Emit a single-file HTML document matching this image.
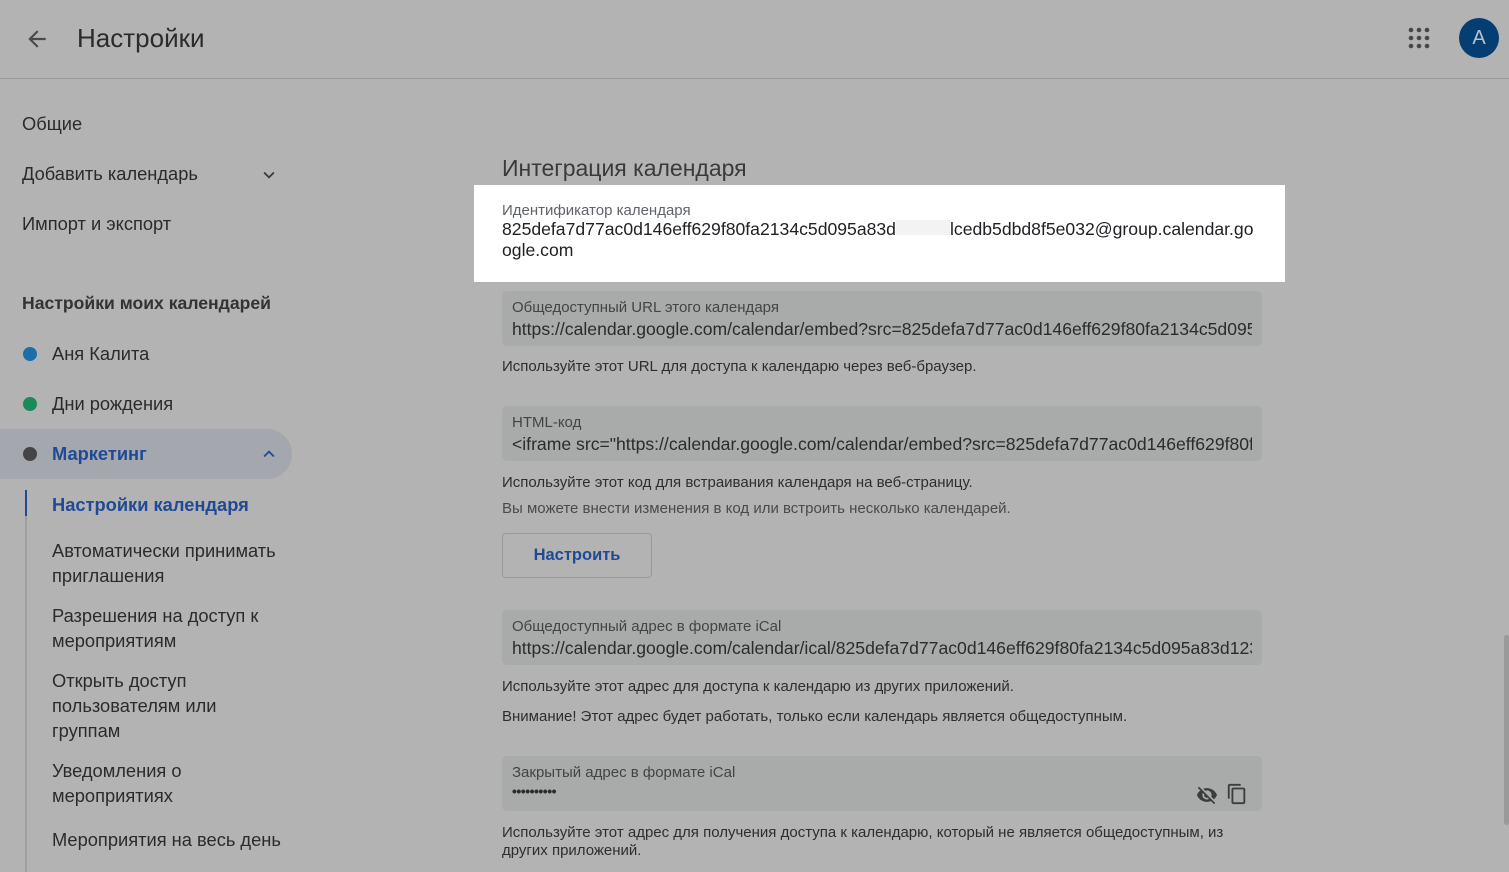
<!DOCTYPE html>
<html><head><meta charset="utf-8"><style>
*{margin:0;padding:0;box-sizing:border-box}
body{width:1509px;height:872px;overflow:hidden;background:#b3b3b3;font-family:"Liberation Sans",sans-serif;color:#2b2b2b;position:relative}
.a{position:absolute;white-space:nowrap}
.nav{font-size:18.3px;color:#2b2b2b}
.field{position:absolute;left:502px;width:760px;background:#a9aaaa;border-radius:5px}
.lab{position:absolute;left:10px;font-size:15px;color:#444}
.val{position:absolute;left:10px;font-size:17.6px;color:#2b2b2b;white-space:nowrap;overflow:hidden;width:740px}
.help{position:absolute;left:502px;font-size:15px;color:#2e2e2e;white-space:nowrap}
</style></head><body>
<svg class="a" style="left:24px;top:26px" width="26" height="26" viewBox="0 0 24 24"><path d="M20 11H7.8l5.6-5.6L12 4l-8 8 8 8 1.4-1.4L7.8 13H20z" fill="#4a4a4a"/></svg>
<div class="a" style="left:77px;top:23px;font-size:26px;color:#2b2b2b">Настройки</div>
<svg class="a" style="left:1408px;top:27px" width="22" height="22"><g fill="#474747"><circle cx="3" cy="3" r="2.3"/><circle cx="11" cy="3" r="2.3"/><circle cx="19" cy="3" r="2.3"/><circle cx="3" cy="11" r="2.3"/><circle cx="11" cy="11" r="2.3"/><circle cx="19" cy="11" r="2.3"/><circle cx="3" cy="19" r="2.3"/><circle cx="11" cy="19" r="2.3"/><circle cx="19" cy="19" r="2.3"/></g></svg>
<div class="a" style="left:1459px;top:18px;width:40px;height:40px;border-radius:50%;background:#043e72;color:#b8c3cf;font-size:20px;text-align:center;line-height:40px">A</div>
<div class="a" style="left:0;top:78px;width:1509px;height:1px;background:#9a9a9a"></div>

<div class="a nav" style="left:22px;top:113px">Общие</div>
<div class="a nav" style="left:22px;top:163px">Добавить календарь</div>
<svg class="a" style="left:258px;top:164px" width="22" height="22" viewBox="0 0 24 24"><path d="M7.4 8.6 12 13.2l4.6-4.6L18 10l-6 6-6-6z" fill="#3a3a3a"/></svg>
<div class="a nav" style="left:22px;top:213px">Импорт и экспорт</div>
<div class="a nav" style="left:22px;top:293px;font-weight:bold;font-size:17.6px;color:#333">Настройки моих календарей</div>
<div class="a" style="left:23px;top:347px;width:14px;height:14px;border-radius:50%;background:#1b6fa8"></div>
<div class="a nav" style="left:52px;top:343px">Аня Калита</div>
<div class="a" style="left:23px;top:397px;width:14px;height:14px;border-radius:50%;background:#1a8a5a"></div>
<div class="a nav" style="left:52px;top:393px">Дни рождения</div>
<div class="a" style="left:0;top:429px;width:292px;height:50px;border-radius:0 25px 25px 0;background:#a4a7ae"></div>
<div class="a" style="left:23px;top:447px;width:14px;height:14px;border-radius:50%;background:#444"></div>
<div class="a nav" style="left:52px;top:443px;color:#1f4a95;font-weight:bold">Маркетинг</div>
<svg class="a" style="left:258px;top:443px" width="22" height="22" viewBox="0 0 24 24"><path d="M7.4 15.4 12 10.8l4.6 4.6L18 14l-6-6-6 6z" fill="#1f4a95"/></svg>
<div class="a" style="left:25px;top:490px;width:2px;height:382px;background:#9e9e9e"></div>
<div class="a" style="left:25px;top:490px;width:2px;height:26px;background:#1f4a95"></div>
<div class="a nav" style="left:52px;top:494px;color:#1f4a95;font-weight:bold">Настройки календаря</div>
<div class="a nav" style="left:52px;top:538px;line-height:25px">Автоматически принимать<br>приглашения</div>
<div class="a nav" style="left:52px;top:603px;line-height:25px">Разрешения на доступ к<br>мероприятиям</div>
<div class="a nav" style="left:52px;top:668px;line-height:25px">Открыть доступ<br>пользователям или<br>группам</div>
<div class="a nav" style="left:52px;top:758px;line-height:25px">Уведомления о<br>мероприятиях</div>
<div class="a nav" style="left:52px;top:829px">Мероприятия на весь день</div>

<div class="a" style="left:502px;top:155px;font-size:23px;color:#3a3a3a">Интеграция календаря</div>
<div class="a" style="left:474px;top:185px;width:811px;height:97px;background:#fff"></div>
<div class="a" style="left:502px;top:202px;font-size:15px;color:#5f6368">Идентификатор календаря</div>
<div class="a" style="left:502px;top:219px;font-size:17.6px;color:#202124;line-height:21px">825defa7d77ac0d146eff629f80fa2134c5d095a83d<span style="display:inline-block;width:54px;height:15px;background:#f3f3f3"></span>lcedb5dbd8f5e032@group.calendar.go<br>ogle.com</div>

<div class="field" style="top:291px;height:55px"><div class="lab" style="top:8px">Общедоступный URL этого календаря</div><div class="val" style="top:28px">https://calendar.google.com/calendar/embed?src=825defa7d77ac0d146eff629f80fa2134c5d095a83d</div></div>
<div class="help" style="top:358px">Используйте этот URL для доступа к календарю через веб-браузер.</div>
<div class="field" style="top:406px;height:55px"><div class="lab" style="top:8px">HTML-код</div><div class="val" style="top:28px">&lt;iframe src="https://calendar.google.com/calendar/embed?src=825defa7d77ac0d146eff629f80fa</div></div>
<div class="help" style="top:474px">Используйте этот код для встраивания календаря на веб-страницу.</div>
<div class="help" style="top:500px;color:#4a4a4a">Вы можете внести изменения в код или встроить несколько календарей.</div>
<div class="a" style="left:502px;top:533px;width:150px;height:45px;border:1px solid #999;border-radius:4px;color:#1f4a95;font-size:16.5px;font-weight:bold;text-align:center;line-height:43px">Настроить</div>
<div class="field" style="top:610px;height:55px"><div class="lab" style="top:8px">Общедоступный адрес в формате iCal</div><div class="val" style="top:28px">https://calendar.google.com/calendar/ical/825defa7d77ac0d146eff629f80fa2134c5d095a83d1234</div></div>
<div class="help" style="top:678px">Используйте этот адрес для доступа к календарю из других приложений.</div>
<div class="help" style="top:708px">Внимание! Этот адрес будет работать, только если календарь является общедоступным.</div>
<div class="field" style="top:756px;height:55px"><div class="lab" style="top:8px">Закрытый адрес в формате iCal</div><div class="val" style="top:27px;font-size:14px;font-weight:bold;letter-spacing:-0.5px">••••••••••</div>
<svg class="a" style="left:694px;top:28px" width="22" height="22" viewBox="0 0 24 24"><path d="M12 7c2.8 0 5 2.2 5 5 0 .6-.1 1.3-.4 1.8l2.9 2.9c1.5-1.3 2.7-2.9 3.4-4.7-1.7-4.4-6-7.5-11-7.5-1.4 0-2.7.3-4 .7l2.2 2.2c.6-.3 1.2-.4 1.9-.4zM2 4.3l2.3 2.3.5.4C3.1 8.3 1.8 10 1 12c1.7 4.4 6 7.5 11 7.5 1.5 0 3-.3 4.4-.8l.4.4 2.9 2.9 1.3-1.3L3.3 3 2 4.3zm5.5 5.5 1.5 1.5c0 .2-.1.5-.1.7 0 1.7 1.3 3 3 3 .2 0 .5 0 .7-.1l1.5 1.5c-.7.3-1.4.5-2.2.5-2.8 0-5-2.2-5-5 0-.8.2-1.5.5-2.2z" fill="#3c3c3c"/></svg>
<svg class="a" style="left:724px;top:27px" width="22" height="22" viewBox="0 0 24 24"><path d="M16 1H4c-1.1 0-2 .9-2 2v14h2V3h12V1zm3 4H8c-1.1 0-2 .9-2 2v14c0 1.1.9 2 2 2h11c1.1 0 2-.9 2-2V7c0-1.1-.9-2-2-2zm0 16H8V7h11v14z" fill="#3c3c3c"/></svg></div>
<div class="help" style="top:824px;line-height:18px">Используйте этот адрес для получения доступа к календарю, который не является общедоступным, из<br>других приложений.</div>
<div class="a" style="left:1504px;top:635px;width:5px;height:190px;background:#9a9a9a;border-radius:3px"></div>
</body></html>
